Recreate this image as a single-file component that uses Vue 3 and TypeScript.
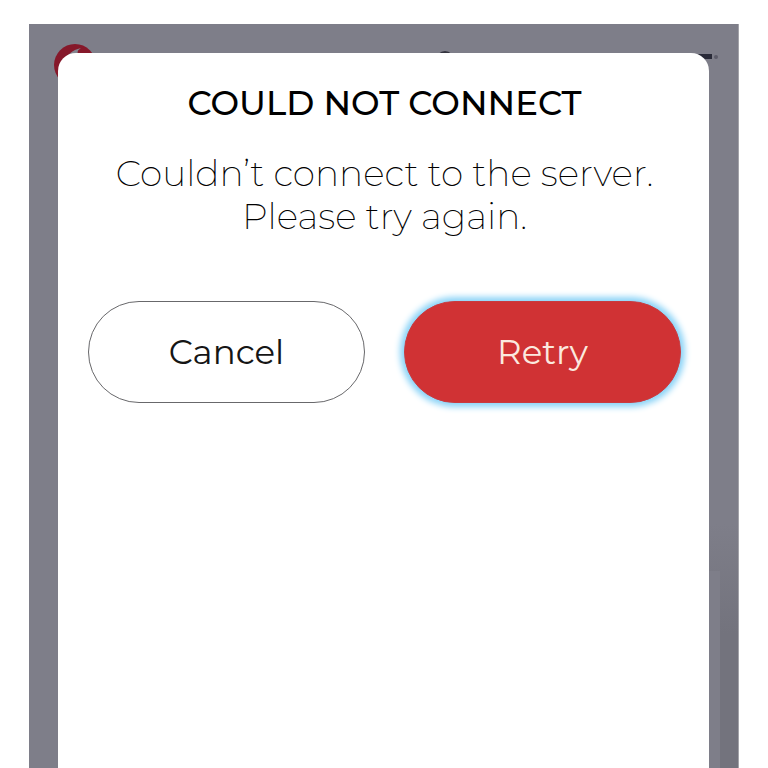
<script setup lang="ts">
import { ref } from 'vue'

const title = ref('COULD NOT CONNECT')
const lines = ref(['Couldn’t connect to the server.', 'Please try again.'])
</script>

<template>
  <div class="page">
    <div class="screen">
      <div class="backdrop" aria-hidden="true">
        <svg class="logo" viewBox="0 0 44 44">
          <circle cx="22" cy="22" r="21" fill="#86182a" />
          <path d="M10 19C14 12 19 7 28 5C25 7 24 8 25 12L14 16L8 24Z" fill="#85858f" />
        </svg>
        <svg class="avatar" viewBox="0 0 20 20">
          <circle cx="10" cy="10" r="9" fill="#34343f" />
        </svg>
        <svg class="menu" viewBox="0 0 28 6">
          <rect width="22" height="5" fill="#292a38" />
          <circle cx="26" cy="3" r="2" fill="#5c5b68" />
        </svg>
        <div class="shade"></div>
        <div class="panel"></div>
      </div>
      <main class="dialog" role="dialog" aria-modal="true" aria-labelledby="dialog-title" aria-describedby="dialog-text">
        <h1 id="dialog-title">{{ title }}</h1>
        <p id="dialog-text"><span v-for="line in lines" :key="line">{{ line }}</span></p>
        <div class="actions">
          <button type="button" class="cancel">Cancel</button>
          <button type="button" class="retry">Retry</button>
        </div>
      </main>
    </div>
  </div>
</template>

<style>
body {
  background: #fff;
}
</style>

<style scoped>
.page {
  box-sizing: border-box;
  display: flex;
  min-height: 100vh;
  padding: 24px 29px 0;
  font-family: Montserrat, Inter, "Liberation Sans", sans-serif;
}
.screen {
  position: relative;
  display: flex;
  flex: 1;
  padding: 29px 29px 0;
  background: #7e7e89;
  border: solid #a3a3a9;
  border-width: 0 1px 0 0;
  overflow: hidden;
}
.backdrop {
  position: absolute;
  inset: 0;
}
.logo {
  position: absolute;
  top: 19px;
  left: 24px;
  width: 44px;
  height: 44px;
}
.avatar {
  position: absolute;
  top: 26px;
  left: 406px;
  width: 20px;
  height: 20px;
}
.menu {
  position: absolute;
  top: 30px;
  right: 20px;
  width: 28px;
  height: 6px;
}
.shade {
  position: absolute;
  top: 500px;
  right: 0;
  bottom: 0;
  width: 30px;
  background: linear-gradient(#7e7e89, #73737d 110px);
}
.panel {
  position: absolute;
  top: 547px;
  right: 18px;
  bottom: 0;
  width: 14px;
  background: #7e7e89;
}
.dialog {
  position: relative;
  flex: 1;
  padding: 30px 28px 30px 30px;
  background: #fff;
  border-radius: 18px 18px 0 0;
  text-align: center;
}
h1 {
  margin: 0;
  font-size: 34px;
  font-weight: 500;
  line-height: 40px;
  color: #000;
}
p {
  margin: 29px 0 63px;
  font-size: 36px;
  font-weight: 200;
  line-height: 43px;
  color: #000;
}
p span {
  display: block;
}
.actions {
  display: grid;
  grid-template-columns: 1fr 1fr;
  gap: 39px;
}
button {
  height: 102px;
  padding: 0;
  border: 1px solid #68686b;
  border-radius: 51px;
  background: #fff;
  color: #151515;
  font-family: inherit;
  font-size: 34px;
  font-weight: 400;
  line-height: 40px;
  cursor: pointer;
}
.retry {
  border-color: #c93a3f;
  background: #d03234;
  color: #fbe9df;
  box-shadow: 0 0 6px 4px #8ad3f7;
}
</style>
